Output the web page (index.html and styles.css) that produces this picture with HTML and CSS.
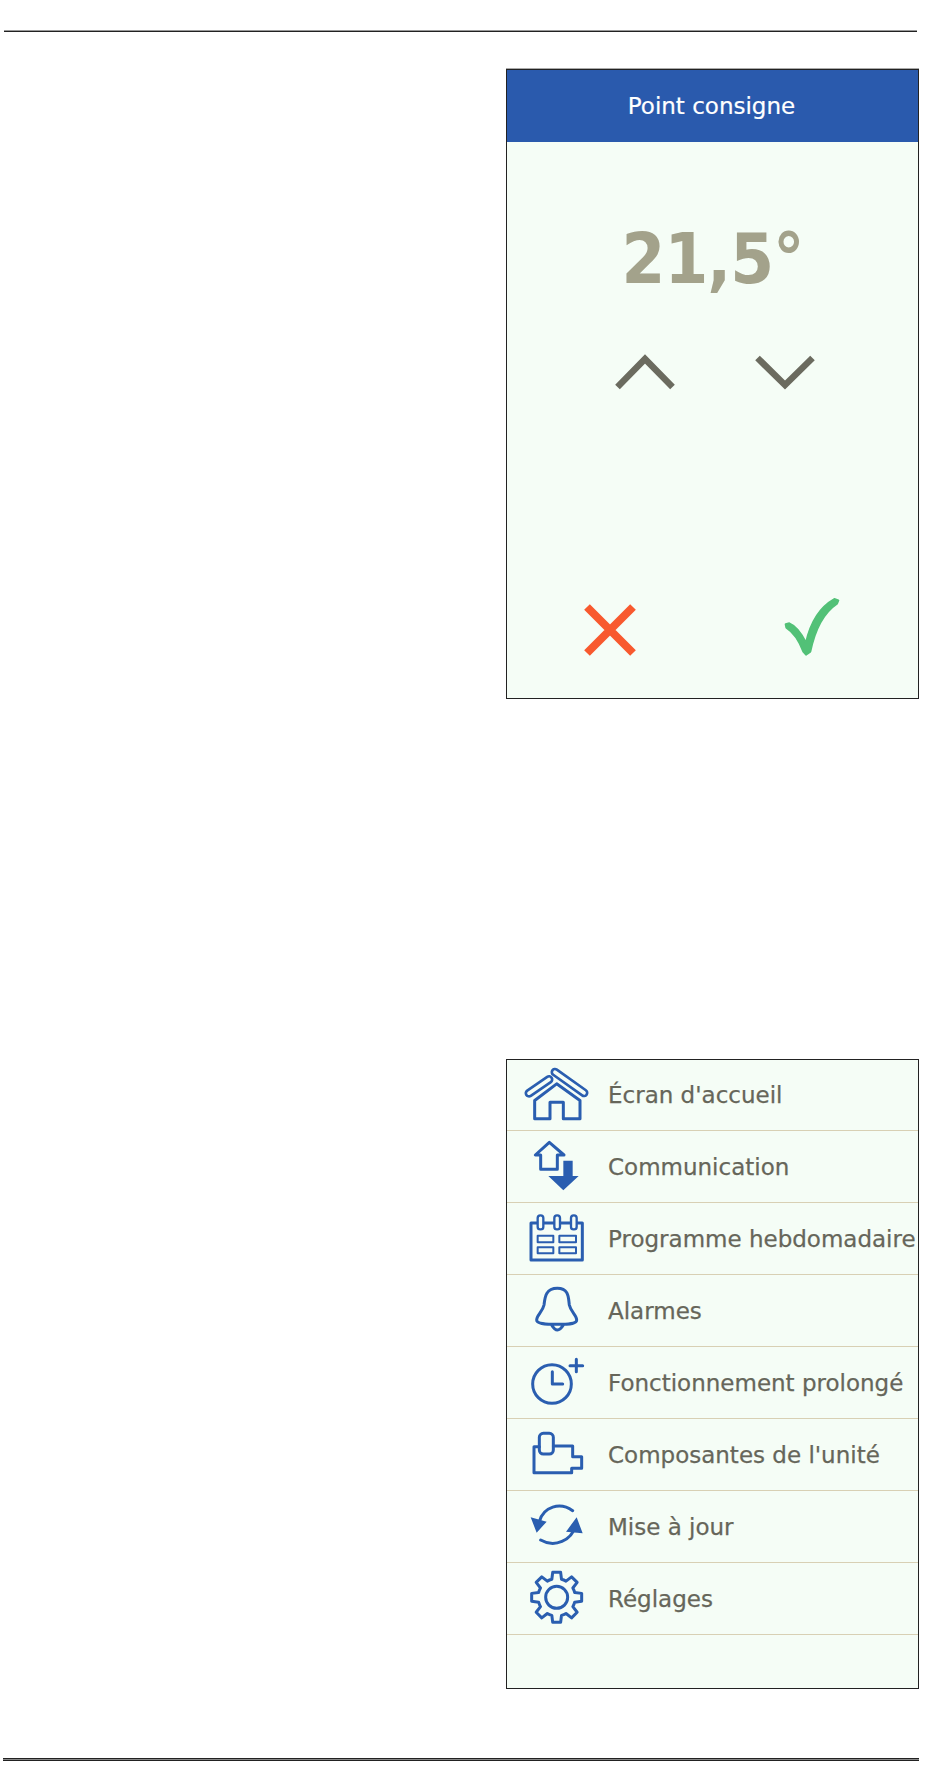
FILE: index.html
```html
<!DOCTYPE html>
<html lang="fr">
<head>
<meta charset="utf-8">
<title>Point consigne</title>
<link rel="stylesheet" href="styles.css">
</head>
<body>
<div class="page">
  <div class="rule-top"></div>
  <section class="panel setpoint">
    <header class="title">Point consigne</header>
    <div class="value">21,5°</div>
    <div class="chevrons">
      <svg class="chev" viewBox="0 0 60 36"><path d="M2.5 33 L30 5 L57.5 33"/></svg>
      <svg class="chev" viewBox="0 0 60 36"><path d="M2.5 4 L30 31 L57.5 4"/></svg>
    </div>
    <div class="actions">
      <svg class="cancel" viewBox="0 1 60 60"><path d="M7 7 L53 53 M53 7 L7 53"/></svg>
      <svg class="confirm" viewBox="855 90 210 210"><path d="M884 190 L895 187 C915 195 930 215 945 245 C955 200 975 145 1030 114 L1042 118 L1038 128 C1005 150 975 190 958 272 L945 281 L937 272 C925 240 905 212 886 200 Z"/></svg>
    </div>
  </section>
  <section class="panel menu">
    <div class="row first">
      <svg class="ico" viewBox="21 30 300 210">
        <path class="cap-o" d="M87 128 L147 87 M165 65 L252 127"/>
        <path class="cap-i" d="M87 128 L147 87 M165 65 L252 127"/>
        <path class="ln" d="M104 205 V150 L170 100 L240 150 V205 H190 V155 H150 V205 Z"/>
      </svg>
      <span>Écran d'accueil</span>
    </div>
    <div class="row">
      <svg class="ico" viewBox="21 243 300 213">
        <path class="ln" d="M148 277 L106 315 H122 V358 H172 V315 H192 Z"/>
        <path class="fill" d="M190 332 H218 V378 H236 L190 421 L145 378 H190 Z"/>
      </svg>
      <span>Communication</span>
    </div>
    <div class="row">
      <svg class="ico" viewBox="21 459 300 213">
        <path class="ln" d="M93 519 H247 V630 H93 Z"/>
        <path class="ln thin" d="M113 557 H160 V577 H113 Z M178 557 H228 V577 H178 Z M113 592 H160 V610 H113 Z M178 592 H228 V610 H178 Z"/>
        <rect class="ring" x="113" y="496" width="17" height="42" rx="8"/>
        <rect class="ring" x="163" y="496" width="17" height="42" rx="8"/>
        <rect class="ring" x="213" y="496" width="17" height="42" rx="8"/>
      </svg>
      <span>Programme hebdomadaire</span>
    </div>
    <div class="row">
      <svg class="ico" viewBox="21 15 300 213">
        <path class="ln" d="M172 55 C135 55 135 85 132 105 C128 125 110 135 110 150 C110 160 130 163 172 163 C215 163 230 160 230 150 C230 135 212 125 208 105 C205 85 208 55 172 55 Z M155 165 Q172 195 190 165"/>
      </svg>
      <span>Alarmes</span>
    </div>
    <div class="row">
      <svg class="ico" viewBox="21 231 300 213">
        <circle class="ln" cx="156" cy="342" r="58"/>
        <path class="ln" d="M157 305 V342 H188 M229 268 V305 M210 287 H248"/>
      </svg>
      <span>Fonctionnement prolongé</span>
    </div>
    <div class="row">
      <svg class="ico" viewBox="21 447 300 213">
        <path class="ln" d="M118 530 H102 V608 H215 V595 H245 V560 H218 V528 H160"/>
        <rect class="ln" x="118" y="490" width="42" height="62" rx="12"/>
      </svg>
      <span>Composantes de l'unité</span>
    </div>
    <div class="row">
      <svg class="ico" viewBox="21 3 300 213">
        <path class="ln" d="M218 62 C180 35 130 50 118 95 M122 150 C165 175 215 150 225 110"/>
        <path class="fill" d="M92 82 L140 95 L110 128 Z M230 82 L248 130 L198 125 Z"/>
      </svg>
      <span>Mise à jour</span>
    </div>
    <div class="row">
      <svg class="ico" viewBox="21 219 300 213">
        <g transform="translate(170 322)">
          <circle class="ln" r="33"/>
          <path class="ln" d="M-14.5 -54.1 L-11.9 -75 L11.9 -75 L14.5 -54.1 A56 56 0 0 1 28 -48.5 L44.7 -61.5 L61.5 -44.7 L48.5 -28 A56 56 0 0 1 54.1 -14.5 L75 -11.9 L75 11.9 L54.1 14.5 A56 56 0 0 1 48.5 28 L61.5 44.7 L44.7 61.5 L28 48.5 A56 56 0 0 1 14.5 54.1 L11.9 75 L-11.9 75 L-14.5 54.1 A56 56 0 0 1 -28 48.5 L-44.7 61.5 L-61.5 44.7 L-48.5 28 A56 56 0 0 1 -54.1 14.5 L-75 11.9 L-75 -11.9 L-54.1 -14.5 A56 56 0 0 1 -48.5 -28 L-61.5 -44.7 L-44.7 -61.5 L-28 -48.5 A56 56 0 0 1 -14.5 -54.1 Z"/>
        </g>
      </svg>
      <span>Réglages</span>
    </div>
  </section>
  <div class="rule-bottom"></div>
</div>
</body>
</html>
```
FILE: styles.css
```css
html, body { margin: 0; padding: 0; background: #fff; }
body { font-family: "DejaVu Sans", "Liberation Sans", sans-serif; }
.page { width: 950px; height: 1787px; padding-top: 30px; box-sizing: border-box; }
.rule-top {
  width: 913px; height: 2px; margin-left: 4px; box-sizing: border-box;
  border-top: 1px solid #999; border-bottom: 1px solid #222;
}
.panel {
  width: 413px; margin-left: 506px; box-sizing: border-box;
  border: 1px solid #222; background: #f5fdf6;
}
.setpoint {
  height: 630px; margin-top: 37px; display: flex; flex-direction: column;
  box-shadow: 0 -1px 0 #aaa;
}
.title {
  height: 72px; background: #2a5aad; color: #fff;
  font-size: 23px; line-height: 73px; text-align: center;
  padding-right: 2px; -webkit-text-stroke: 0.2px #fff;
}
.value {
  margin-top: 77px; height: 80px; line-height: 80px; text-align: center;
  font-size: 70px; font-weight: 700; color: #a3a28b;
  font-family: "DejaVu Sans", sans-serif; font-stretch: condensed; letter-spacing: -1px;
}
.chevrons { display: flex; justify-content: center; gap: 80px; padding-left: 4px; margin-top: 55px; }
.chev { width: 60px; height: 36px; fill: none; stroke: #6b6b5f; stroke-width: 6.5; stroke-linecap: butt; }
.actions {
  margin-top: auto; padding: 0 72px 37px 73px;
  display: flex; justify-content: space-between; align-items: flex-end;
}
.cancel { width: 60px; height: 60px; fill: none; stroke: #f8592e; stroke-width: 8; stroke-linecap: butt; }
.confirm { width: 70px; height: 70px; fill: #52c177; stroke: #52c177; stroke-width: 6; stroke-linejoin: round; }
.menu { height: 630px; margin-top: 360px; }
.row {
  height: 72px; box-sizing: border-box; border-bottom: 1px solid #d8d0b4;
  display: flex; align-items: center; gap: 1px;
  font-size: 23px; color: #66665a; white-space: nowrap;
  -webkit-text-stroke: 0.25px #66665a;
}
.row.first { height: 71px; }
.ico { width: 100px; height: 71px; flex: none; }
.ln { fill: none; stroke: #2a5eb0; stroke-width: 9; stroke-linejoin: round; stroke-linecap: round; }
.ln.thin { stroke-width: 6; stroke-linecap: butt; }
.fill { fill: #2a5eb0; }
.cap-o { fill: none; stroke: #2a5eb0; stroke-width: 27; stroke-linecap: round; }
.cap-i { fill: none; stroke: #f5fdf6; stroke-width: 11; stroke-linecap: round; }
.ring { fill: #f5fdf6; stroke: #2a5eb0; stroke-width: 7; }
.rule-bottom {
  width: 916px; height: 3px; margin-left: 3px; margin-top: 69px; box-sizing: border-box;
  background: #888; border-top: 1px solid #222; border-bottom: 1px solid #222;
}
```
